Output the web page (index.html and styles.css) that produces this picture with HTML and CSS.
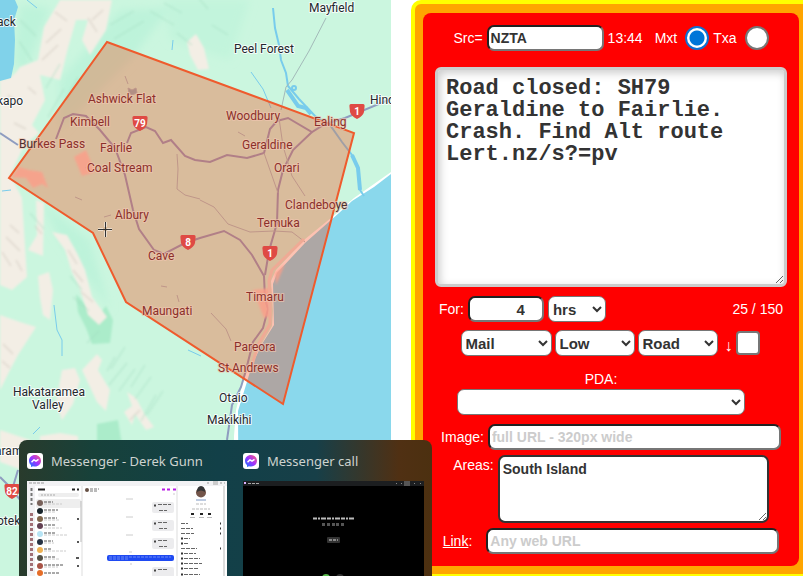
FILE: index.html
```html
<!DOCTYPE html>
<html lang="en">
<head>
<meta charset="utf-8">
<title>Road alert editor</title>
<link rel="stylesheet" href="styles.css">
</head>
<body>
<main class="page">
<section class="map" aria-label="Alert area map">
<svg class="map-art" viewBox="0 0 391 576" preserveAspectRatio="xMinYMin slice">
  <defs>
    <filter id="soft"><feGaussianBlur stdDeviation="1"/></filter>
    <filter id="haze"><feGaussianBlur stdDeviation="4"/></filter>
    <g id="shield"><path d="M-6-7H6Q8-7 7.500-4L7 1Q6 5 0 8Q-6 5-7 1L-7.500-4Q-8-7-6-7z"/></g>
  </defs>
  <rect width="391" height="576" fill="#cbf6df"/>
  <g filter="url(#haze)" fill="#bdf3da">
    <path d="M20 5L50 8L25 75L14 60z"/><path d="M60 80L120 10L170 8L130 60L60 130z"/>
    <path d="M165 0L250 0L230 60L170 40z" fill="#c2f4dc"/><path d="M40 200L90 240L110 310L60 240z"/>
  </g>
  <g filter="url(#soft)" fill="#abecca"><path d="M76 294L86 305L96 318L106 306L113 320L110 343L92 344L86 328L78 312zM97 424L118 420L122 445L97 445z"/></g>
  <g filter="url(#soft)" fill="#f3eee5">
    <path d="M0 80Q12 80 20 67L38 60L44 27L60 0L112 0L106 30L90 55L82 40L88 20L76 20L68 48L60 80L40 75L45 100L32 125L39 133L28 142L0 135z"/>
    <path d="M0 120L34 133L22 150L10 175L22 198L24 230L27 277L12 290L0 285z"/>
    <path d="M36 200L44 203L43 256L28 250L37 235zM52 232L67 235L77 253L85 270L92 297L107 317L99 325L88 315L80 289L72 272L65 250zM38 276L49 272L53 290L50 320L43 315L40 298z"/>
    <path d="M0 315L20 322L36 327L18 355L10 370L0 390zM62 370L75 368L80 380L73 404L62 420L56 402zM82 370L97 354L102 360L98 370L110 390L106 411L97 402zM127 392L136 398L145 415L154 427L146 430L135 414L132 425L124 412L132 406z"/>
    <path d="M187 42L196 34L204 48L209 69L198 70L190 55z"/>
    <path d="M0 430L30 440L22 470L0 462zM40 436L60 433L78 436L78 445L40 445z"/>
  </g>
  <g fill="none" stroke="#9fd9bd" stroke-width="2" opacity=".3" filter="url(#soft)">
    <path d="M60 64l-14 24m18 1l-16 28m30-40l-12 22M110 25l24-14m-20 28l30-18m6-10l24 14m-10-22l18 10m-5 20l15 12m4-50l12 14m4 16l16 10M20 20l16 16m-17 5l13 20M30 213l14 16M70 276l12 14m-9 7l16 14m10 20l-12 12m28 14l-8 14m18-24l-14 22m16-6l-18 22m26-16l-16 22m26-26l-14 22m20-10l-16 22m21-4l-15 26m22-30l-16 24"/>
  </g>
  <g fill="none" stroke="#cfc7bd" stroke-width="2" opacity=".4" filter="url(#soft)">
    <path d="M55 12l12 9m-6 8l-15 14m12 2l-16 15m46-42l9 14m6-22l-11 10M10 225l9 8m-13 4l14 14M2 252l9 14m5-6l6 11M68 250l9 14m-4 6l10 12m-2 10l12 10M35 226l7 8M3 344l10 10M2 361l8 7M8 95l10 8m-4 20l12 6m2-42l8 7M140 410l-10 10"/>
  </g>
  <path d="M0 0H15L18 7L14 20L15 40L14 64L11 78L0 81z" fill="#80d2ea"/>
  <path d="M391 172L374 184L354 198L337 213L304 240L276 270L271 281L273 311L272 326L258 350L247 371L242 386L236 410L234 436V576H391z" fill="#fff"/>
  <path d="M391 174L374 187L352 201L339 213L305 243L277 273L273 284L274 325L262 344L252 365L246 385L238 411L239 576H391z" fill="#8ad8ec"/>
  <g fill="none" stroke="#78ccec" stroke-width="2">
    <path d="M273 8L275 28L279 45L281 60L286 73L288 86L299 99L315 116L330 125L342 142L352 155L358 168L360 190L364 196" stroke-width="2"/>
    <path d="M287 90L298 106L306 108L311 114M352 155L358 168L360 190" stroke-width="4"/>
    <path d="M251 72L263 89L271 108" stroke-width="1"/><path d="M173 40l-1 10M27 0l10 8M54 305l3 25 5 10 0 16M2 191l9-1M40 427l-7 7M188 350l13 6" stroke-width="1"/>
    <ellipse cx="294" cy="88" rx="2" ry="2"/>
  </g>
  <path d="M326 18L309 51L292 80L286 87L281 110" fill="none" stroke="#a3bab9" stroke-width="1"/>
  <g fill="none" stroke="#8f9dc0" stroke-width="2">
    <path d="M0 133L18 145M56 139L64 118L73 114L86 116L100 130L115 148L125 175L133 210L139 229L154 250L164 254L185 243L200 238L224 231L240 240L252 255L264 276L265 299L268 309L263 328L253 342L246 370L241 387L232 405L227 440"/>
    <path d="M127 143L131 133L146 127L155 131L163 143L171 140L185 156L195 160L210 162L227 155L247 158L264 153L270 129L277 121L288 118L312 132L325 124L345 118L391 99"/>
    <path d="M312 132L293 150L283 170L278 190L277 223L269 251L265 275"/>
    <path d="M0 477L10 487L40 507M12 490L40 524M18 470L12 490" stroke-width="2"/>
  </g>
  <g fill="none" stroke="#a4bfc3" stroke-width="1">
    <path d="M264 153l7 20 7 20M279 118l4 28 9 30 13 20M200 200l14 7 14 17 22 8 24-1 18 1 13 10M211 313l15 16 5 12M177 154l1 15-1 20 8 6 15 4M125 76l3 8M104 217l7-2M161 286l6 1M177 295l2 7M85 168l5-3M75 197l7 3M238 132l7 4"/>
    <path d="M128 88l4 2 4-2 1 5-5 2-3-2z" fill="#90b4bc"/>
  </g>
  <g fill="#ffc9c2" opacity=".8" filter="url(#soft)">
    <path d="M12 177L19 167L29 170L42 172L48 188L42 184L33 188L26 178zM74 157L86 150L95 172L82 176zM253 290L271 288L271 316L264 318zM275 273L285 264L276 285z"/>
  </g>
  <polygon points="107,42 354,133 283,404 126,302 93,233 9,178" fill="#f8410f" fill-opacity=".32" stroke="#ef5b2d" stroke-width="2"/>
  <path d="M304 239L272 270L269 281L270 310L270 324L258 345L250 372" fill="none" stroke="#efaa95" stroke-width="3"/>
  <g class="place">
    <text x="309" y="12">Mayfield</text><text x="234" y="53">Peel Forest</text><text x="370" y="104">Hinds</text>
    <text x="-3" y="26">ack</text><text x="-3" y="105">kapo</text><text x="13" y="396">Hakataramea</text><text x="32" y="409">Valley</text>
    <text x="219" y="402">Otaio</text><text x="207" y="424">Makikihi</text>
    <text x="-5" y="455">aramea</text><text x="-3" y="525">otekaike</text>
  </g>
  <g class="place place-inside">
    <text x="88" y="103">Ashwick Flat</text><text x="70" y="126">Kimbell</text>
    <text x="19" y="148"><tspan class="outside">Bur</tspan>kes Pass</text>
    <text x="100" y="152">Fairlie</text><text x="87" y="172">Coal Stream</text><text x="226" y="120">Woodbury</text>
    <text x="314" y="126">Ealing</text><text x="242" y="149">Geraldine</text><text x="274" y="172">Orari</text>
    <text x="285" y="209">Clandebo<tspan class="outside">ye</tspan></text><text x="257" y="227">Temuka</text>
    <text x="115" y="219">Albury</text><text x="148" y="260">Cave</text><text x="142" y="315">Maungati</text>
    <text x="246" y="301">Timaru</text><text x="234" y="351">Pareora</text><text x="218" y="372">St Andrews</text>
  </g>
  <g class="shields">
    <use href="#shield" x="140" y="123"/><use href="#shield" x="357" y="111"/><use href="#shield" x="188" y="242"/><use href="#shield" x="270" y="253"/><use href="#shield" x="12" y="491"/>
    <text x="140" y="127">79</text><text x="357" y="115">1</text><text x="188" y="246">8</text><text x="270" y="257">1</text><text x="12" y="495">82</text>
  </g>
  <path d="M98 229.500H103M107 229.500H112M105.500 222V227M105.500 231V237" stroke="#fff" stroke-width="3" opacity=".5"/>
  <path d="M98 229.500H112M105.500 222V237" stroke="#333" stroke-width="1"/>
</svg>
</section>

<form class="alert">
  <div class="alert-body">
    <div class="row row-source">
      <label for="src">Src=</label><input class="field src" id="src" type="text" value="NZTA">
      <span>13:44</span>
      <label class="mode" for="mxt">Mxt</label><input class="tick" id="mxt" type="radio" name="mode" checked>
      <label for="txa">Txa</label><input class="tick" id="txa" type="radio" name="mode">
    </div>
    <textarea class="message" aria-label="Message">Road closed: SH79 Geraldine to Fairlie. Crash. Find Alt route Lert.nz/s?=pv</textarea>
    <div class="row row-time">
      <label for="hours">For:</label><input class="field hours" id="hours" type="number" value="4">
      <select class="field unit" aria-label="Unit"><option>hrs</option></select>
      <output class="count">25 / 150</output>
    </div>
    <div class="row row-kind">
      <select class="field channel" aria-label="Channel"><option>Mail</option></select>
      <select class="field level" aria-label="Level"><option>Low</option></select>
      <select class="field topic" aria-label="Topic"><option>Road</option></select>
      <label class="arrow" for="lower">↓</label><input class="tick" id="lower" type="checkbox">
    </div>
    <div class="pda"><label for="pda">PDA:</label><select class="field" id="pda"><option></option></select></div>
    <div class="row row-image"><label for="image">Image:</label><input class="field wide" id="image" type="text" placeholder="full URL - 320px wide"></div>
    <div class="row row-areas"><label for="areas">Areas:</label><textarea class="areas" id="areas">South Island</textarea></div>
    <div class="row row-link"><span><a href="#link">Link</a>:</span><input class="field wide" id="link" type="text" aria-label="Link" placeholder="Any web URL"></div>
  </div>
</form>
</main>

<aside class="previews">
  <svg class="defs" width="0" height="0"><defs>
    <linearGradient id="msg" x1="0" y1="1" x2="1" y2="0"><stop stop-color="#087cff"/><stop offset=".5" stop-color="#a033ff"/><stop offset="1" stop-color="#ff5c78"/></linearGradient>
    <symbol id="messenger" viewBox="0 0 16 16"><rect width="16" height="16" rx="3" fill="#fff"/><path d="M8 2C4.500 2 2 4.500 2 7.700C2 9.500 2.700 11 4 12V14L6 13.200Q7 13.600 8 13.600C11.500 13.600 14 11 14 7.800S11.500 2 8 2z" fill="url(#msg)"/><path d="M4.500 9.300L7 6.800L9 8.200L11.500 6.400" fill="none" stroke="#fff" stroke-width="1.500" stroke-linejoin="round"/></symbol>
  </defs></svg>
  <figure class="preview chat">
    <figcaption><svg class="logo"><use href="#messenger"/></svg>Messenger - Derek Gunn</figcaption>
    <svg class="shot" viewBox="0 0 200 96" preserveAspectRatio="xMinYMin slice">
      <rect width="200" height="96" fill="#fff"/><path d="M0 0H200V5H0zM0 5H8V96H0z" fill="#f2f2f4"/><rect x="186" y="0" width="5" height="4" fill="#ccc"/>
      <path d="M2 2h15M180 2h2M193 2h2M197 2h1" stroke="#999" stroke-dasharray="3 1"/>
      <path d="M55 5V96M150 5V96" stroke="#ddd"/><rect x="11" y="12" width="41" height="4" rx="2" fill="#eee"/><rect x="9" y="18" width="45" height="9" rx="2" fill="#eee"/><path d="M54 20V61" stroke="#bbb" stroke-width="1"/>
      <path d="M11 8.500H18M45 8.500h3M50 8.500h2" stroke="#222" stroke-width="2"/><path d="M14 14h14" stroke="#aaa" stroke-dasharray="2 1"/>
      <g><circle cx="13" cy="22" r="3" fill="#78615a"/><circle cx="13" cy="30" r="3" fill="#18252b"/><circle cx="13" cy="38" r="3" fill="#80664b"/><circle cx="13" cy="45" r="3" fill="#634052"/><circle cx="13" cy="53" r="3" fill="#b7e4f5"/><circle cx="13" cy="61" r="3" fill="#253142"/><circle cx="13" cy="69" r="3" fill="#eeb152"/><circle cx="13" cy="77" r="3" fill="#535044"/><circle cx="13" cy="85" r="3" fill="#a85346"/><circle cx="13" cy="92" r="3" fill="#e56d28"/></g>
      <g stroke="#555" stroke-dasharray="3 1"><path d="M17 21h9M17 29h14M17 37h13M17 44h12M17 52h11M17 60h9M17 68h7M17 76h11M17 84h20M17 92h15"/><path d="M17 23h18M17 31h12M17 39h16M17 47h18M17 54h23M17 62h10M17 70h22M17 78h15M17 86h14" stroke="#ccc"/><path d="M50 38h2M50 61h2M49 77h3M50 85h2" stroke-width="2"/></g>
      <path d="M4.500 7V24" stroke="#777" stroke-width="2" stroke-dasharray="3 2"/><path d="M4.500 32V91" stroke="#a27076" stroke-width="3" stroke-dasharray="3 2"/>
      <circle cx="60" cy="9" r="2" fill="#665044"/><path d="M63 8h9M63 10h7" stroke="#777" stroke-dasharray="3 1"/><path d="M135 8.500h3M140 8.500h3M146 8.500h3" stroke="#b71be5" stroke-width="2"/>
      <path d="M99 18h7M99 36h7M99 54h7M102 71h3M103 83h2M146 13h2" stroke="#ccc"/>
      <g fill="#ececee"><rect x="125" y="21" width="22" height="11" rx="2"/><rect x="125" y="39" width="22" height="11" rx="2"/><rect x="125" y="57" width="22" height="11" rx="2"/><rect x="125" y="86" width="22" height="11" rx="2"/></g>
      <g stroke="#666" stroke-dasharray="4 1"><path d="M131 23.500h13M131 41.500h9M131 59.500h9M131 88.500h9M132 29.500h8M132 47.500h8M132 65.500h8"/></g><path d="M127 24.500h2M127 42.500h2M127 60.500h2M127 89.500h2" stroke="#444" stroke-width="2"/>
      <rect x="80" y="74" width="67" height="6" rx="2" fill="#1f4af2"/><path d="M82 76h62M82 78h20" stroke="#6d8af6" stroke-dasharray="3 1"/>
      <circle cx="174" cy="11.500" r="5" fill="#73554a"/><path d="M170 11q0-6 4-6t4 6q-4-3-8 0" fill="#343536"/><path d="M169 19h10" stroke="#7d97c4"/><path d="M169 23h10M165 28h18" stroke="#bbb" stroke-dasharray="3 1"/>
      <path d="M164 33h3M173 33h3M181 33h3" stroke="#222" stroke-width="2"/><path d="M163 36.500h5M172 36.500h5M180 36.500h5" stroke="#bbb"/>
      <g stroke="#666" stroke-dasharray="4 1"><path d="M154 42.500h7M154 47.500h12M154 52.500h13M157 57.500h6M157 62.500h4M154 67.500h16M157 72.500h12M157 77.500h16M157 82.500h18M157 87.500h14M157 93.500h16"/></g><path d="M154 57.500h2M154 62.500h2M154 72.500h2M154 77.500h2M154 82.500h2M154 87.500h2M154 93.500h2M193 42.500h1M193 47.500h1M193 52.500h1M193 67.500h1" stroke="#333" stroke-width="2"/><path d="M197 5V96" stroke="#ddd" stroke-width="2"/>
    </svg>
  </figure>
  <figure class="preview call">
    <figcaption><svg class="logo"><use href="#messenger"/></svg>Messenger call</figcaption>
    <svg class="shot" viewBox="0 0 181 96" preserveAspectRatio="xMinYMin slice">
      <rect width="181" height="96"/><rect width="181" height="5" fill="#1c1e20"/><rect x="1" y="1" width="2" height="2" fill="#dbb2ff"/><path d="M5 2.500h11" stroke="#aaa" stroke-dasharray="3 1"/><rect x="161" y="0" width="6" height="5" fill="#555"/><path d="M153 2.500h1M158 2.500h1M171 2.500h1M177 2.500h1" stroke="#888"/>
      <path d="M70 37.500h41" stroke="#bbb" stroke-width="2" stroke-dasharray="4 1 2 1 5 1"/>
      <path d="M79 43.500h3M84 43.500h3M89 43.500h3M93 43.500h3M98 43.500h3" stroke="#555" stroke-width="3"/>
      <rect x="84" y="56" width="13" height="6" rx="1" fill="#333"/><path d="M86 59h9" stroke="#ddd" stroke-dasharray="3 1"/>
      <circle cx="83" cy="97" r="4" fill="#58bc4c"/><circle cx="97" cy="97" r="4" fill="#333"/>
    </svg>
  </figure>
</aside>
</body>
</html>
```
FILE: styles.css
```css
* { box-sizing: border-box; }
body { margin: 0; background: #fff; font: 14px/18px "Liberation Sans", Arial, sans-serif; overflow: hidden; }
.page { display: grid; grid-template-columns: minmax(0, 391fr) minmax(392px, 392fr); gap: 20px; min-height: 100vh; }
.map { position: relative; overflow: hidden; }
.map-art { position: absolute; inset: 0; width: 100%; height: 100%; }
.place text { font: 12px Roboto, sans-serif; fill: #24282d; stroke: #fff; stroke-width: 2px; stroke-opacity: .8; paint-order: stroke; stroke-linejoin: round; }
.place-inside text { fill: #8b302b; stroke: #f0c6b0; stroke-opacity: .7; }
.place-inside .outside { fill: #4b3030; }
.shields { fill: #df4a44; }
.shields text { font: bold 10px Roboto, sans-serif; fill: #fff; text-anchor: middle; }

.alert { align-self: start; border: 4px solid #ff0; border-width: 4px 0 2px 4px; border-radius: 10px 0 0 10px; background: #ffa500; padding: 9px 4px 8px 8px; }
.alert-body { background: #f00; border-radius: 8px; color: #fff; padding: 12px; display: flex; flex-direction: column; }
.row { display: flex; align-items: center; justify-content: center; gap: 4px; }
.alert input, .alert textarea, .alert select { margin: 0; color: #333; font: bold 14px/18px "Liberation Sans", Arial, sans-serif; }
.alert .field { height: 26px; border: 2px solid #767676; border-color: #222 #767676 #767676 #222; border-radius: 7px; background: #fff; padding: 2px; }
.alert select.field { border: 1px solid #767676; font-size: 15px; padding: 0; }
.alert ::placeholder { color: #ccc; opacity: 1; }
.src { width: 117px; }
.mode { margin-left: 8px; }
.alert .tick { appearance: none; width: 24px; height: 24px; flex: none; border: 2px solid #767676; border-radius: 4px; background: #fff; }
.alert .tick[type="radio"] { margin-left: 4px; border-radius: 50%; }
.alert .tick[type="radio"]:checked { border-color: #0f6fd0; background: radial-gradient(circle, #0075d8 7px, #fff 8px); }
.alert .message { display: block; height: 220px; margin: 16px 0 9px; border: 3px solid #ccc; border-radius: 6px; padding: 8px; background: #fff; box-shadow: inset 2px 3px 8px #ccc; font: bold 22px/22px "Liberation Mono", "Courier New", monospace; }
.row-time { justify-content: flex-start; padding: 0 4px; }
.alert .hours { width: 76px; text-align: right; font-size: 15px; }
.unit { width: 58px; }
.count { margin-left: auto; }
.row-kind { margin-top: 8px; gap: 3px; padding-right: 2px; }
.channel { width: 91px; }
.level, .topic { width: 80px; }
.arrow { margin: 6px 0 0 4px; font-size: 16px; }
.pda { display: flex; flex-direction: column; align-items: center; margin: 14px 20px 0 0; }
.pda select { width: 288px; margin-top: 1px; }
.row-image { margin-top: 9px; }
.wide { width: 293px; }
.row-areas { align-items: flex-start; margin-top: 5px; }
.alert .areas { width: 271px; height: 68px; border: 2px solid #333; border-radius: 7px; background: #fff; padding: 3px; }
.row-areas label { padding-top: 1px; }
.row-link { margin-top: 5px; }
.row-link span { margin-right: 10px; }
.row-link a { color: #fff; }

.previews { position: absolute; left: 19px; bottom: 0; width: 413px; height: 136px; display: flex; gap: 16px; padding: 11px 8px 0; border-radius: 8px 8px 0 0; overflow: hidden; background: linear-gradient(90deg, #293b2c, #17413a 18%, #124048 48%, #173f48 72%, #503013 92%, #4c3010); color: #ced3cf; }
.defs { position: absolute; }
.preview { margin: 0; display: flex; flex-direction: column; }
.chat { flex: 200; }
.call { flex: 181; }
.preview figcaption { display: flex; align-items: center; gap: 8px; height: 20px; font: 13px/20px "Noto Sans", "Open Sans", sans-serif; white-space: nowrap; }
.logo { width: 16px; height: 16px; flex: none; }
.shot { width: 100%; height: 96px; margin-top: 10px; }
```
